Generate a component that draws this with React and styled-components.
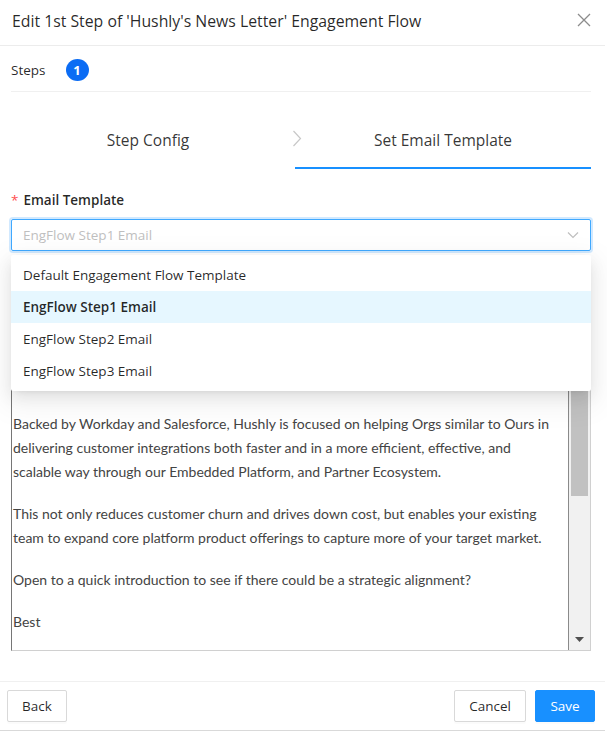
import React from "react";
import styled, { createGlobalStyle } from "styled-components";

const GlobalStyle = createGlobalStyle`
  html, body {
    margin: 0;
    padding: 0;
    background: #ffffff;
  }
  * {
    box-sizing: border-box;
  }
`;

const FONT = `"Open Sans", "Noto Sans", Arial, sans-serif`;

const options = [
  "Default Engagement Flow Template",
  "EngFlow Step1 Email",
  "EngFlow Step2 Email",
  "EngFlow Step3 Email",
];

const paragraphs = [
  "Backed by Workday and Salesforce, Hushly is focused on helping Orgs similar to Ours in delivering customer integrations both faster and in a more efficient, effective, and scalable way through our Embedded Platform, and Partner Ecosystem.",
  "This not only reduces customer churn and drives down cost, but enables your existing team to expand core platform product offerings to capture more of your target market.",
  "Open to a quick introduction to see if there could be a strategic alignment?",
  "Best",
];

const App = () => {
  return (
    <>
      <GlobalStyle />
      <Modal>
        <Header>
          <Title>Edit 1st Step of 'Hushly's News Letter' Engagement Flow</Title>
          <CloseButton aria-label="close">
            <svg width="14" height="14" viewBox="0 0 14 14">
              <path
                d="M1 1 L13 13 M13 1 L1 13"
                stroke="#8c8c8c"
                strokeWidth="1.3"
                fill="none"
              />
            </svg>
          </CloseButton>
        </Header>
        <Body>
          <StepsRow>
            <StepsLabel>Steps</StepsLabel>
            <StepBadge>1</StepBadge>
          </StepsRow>
          <TabsNav>
            <Tab width="274px">Step Config</Tab>
            <Chevron>
              <svg width="10" height="17" viewBox="0 0 10 17">
                <path
                  d="M1.5 1 L8.5 8.5 L1.5 16"
                  stroke="#c8c8c8"
                  strokeWidth="1.2"
                  fill="none"
                />
              </svg>
            </Chevron>
            <Tab active>Set Email Template</Tab>
          </TabsNav>
          <FormItem>
            <Label>
              <Required>*</Required>Email Template
            </Label>
            <SelectWrap>
              <Select>
                <Placeholder>EngFlow Step1 Email</Placeholder>
                <svg width="12" height="12" viewBox="0 0 12 12">
                  <path
                    d="M1 3.5 L6 8.5 L11 3.5"
                    stroke="#bfbfbf"
                    strokeWidth="1.2"
                    fill="none"
                  />
                </svg>
              </Select>
              <Dropdown>
                {options.map((o) => (
                  <Option key={o} selected={o === "EngFlow Step1 Email"}>
                    {o}
                  </Option>
                ))}
              </Dropdown>
            </SelectWrap>
          </FormItem>
          <Editor>
            <EditorContent>
              {paragraphs.map((p) => (
                <Para key={p}>{p}</Para>
              ))}
            </EditorContent>
            <ScrollTrack>
              <ScrollThumb />
              <ScrollArrow>
                <svg width="9" height="5" viewBox="0 0 9 5">
                  <path d="M0 0 L9 0 L4.5 5 Z" fill="#505050" />
                </svg>
              </ScrollArrow>
            </ScrollTrack>
          </Editor>
        </Body>
        <Footer>
          <Button>Back</Button>
          <FooterRight>
            <Button>Cancel</Button>
            <Button primary>Save</Button>
          </FooterRight>
        </Footer>
      </Modal>
    </>
  );
};

export default App;

const Modal = styled.div`
  width: 605px;
  height: 731px;
  background: #ffffff;
  display: flex;
  flex-direction: column;
  font-family: ${FONT};
  color: rgba(0, 0, 0, 0.85);
  border-bottom: 1px solid #d9d9d9;
`;

const Header = styled.div`
  height: 46px;
  display: flex;
  flex-direction: row;
  align-items: center;
  justify-content: space-between;
  padding: 0 14px 3px 12px;
  border-bottom: 1px solid #ececec;
`;

const Title = styled.div`
  font-size: 15.8px;
  color: rgba(0, 0, 0, 0.85);
`;

const CloseButton = styled.div`
  display: flex;
  align-items: center;
  justify-content: center;
  width: 14px;
  height: 14px;
  margin-bottom: 2px;
`;

const Body = styled.div`
  flex: 1;
  padding: 0 14px 0 11px;
  display: flex;
  flex-direction: column;
`;

const StepsRow = styled.div`
  height: 46px;
  display: flex;
  flex-direction: row;
  align-items: center;
  gap: 20px;
  border-bottom: 1px solid #f0f0f0;
  padding-top: 2px;
`;

const StepsLabel = styled.div`
  font-size: 13.5px;
  color: rgba(0, 0, 0, 0.85);
`;

const StepBadge = styled.div`
  width: 23px;
  height: 22px;
  border-radius: 50%;
  background: #0b6cf4;
  color: #ffffff;
  font-size: 13px;
  font-weight: 700;
  display: flex;
  align-items: center;
  justify-content: center;
`;

const TabsNav = styled.div`
  height: 77px;
  display: flex;
  flex-direction: row;
  align-items: stretch;
`;

const Tab = styled.div`
  flex: ${(props) => (props.width ? `0 0 ${props.width}` : "1")};
  display: flex;
  align-items: center;
  justify-content: center;
  padding-top: 20px;
  font-size: 15.5px;
  color: rgba(0, 0, 0, 0.8);
  border-bottom: 2px solid ${(props) => (props.active ? "#1890ff" : "transparent")};
`;

const Chevron = styled.div`
  flex: 0 0 8px;
  display: flex;
  align-items: center;
  justify-content: center;
  padding-top: 15px;
  transform: translateX(7px);
`;

const FormItem = styled.div`
  display: flex;
  flex-direction: column;
  padding-top: 22px;
  gap: 10px;
`;

const Label = styled.div`
  font-size: 13.5px;
  font-weight: 600;
  color: rgba(0, 0, 0, 0.85);
  display: flex;
  align-items: center;
`;

const Required = styled.span`
  color: #ff4d4f;
  margin-right: 5px;
  font-weight: 400;
`;

const SelectWrap = styled.div`
  position: relative;
`;

const Select = styled.div`
  height: 32px;
  border: 1px solid #40a9ff;
  border-radius: 2px;
  box-shadow: 0 0 0 2px rgba(24, 144, 255, 0.2);
  display: flex;
  align-items: center;
  justify-content: space-between;
  padding: 0 11px 0 11px;
`;

const Placeholder = styled.div`
  font-size: 13.5px;
  color: #bfbfbf;
`;

const Dropdown = styled.div`
  position: absolute;
  top: 36px;
  left: 0;
  right: 0;
  z-index: 2;
  background: #ffffff;
  padding: 4px 0;
  border-radius: 2px;
  box-shadow: 0 3px 6px -4px rgba(0, 0, 0, 0.12), 0 6px 16px 0 rgba(0, 0, 0, 0.08),
    0 9px 28px 8px rgba(0, 0, 0, 0.05);
`;

const Option = styled.div`
  height: 32px;
  display: flex;
  align-items: center;
  padding: 0 12px;
  font-size: 13.5px;
  color: rgba(0, 0, 0, 0.85);
  font-weight: ${(props) => (props.selected ? 600 : 400)};
  background: ${(props) => (props.selected ? "#e6f7ff" : "transparent")};
`;

const Editor = styled.div`
  margin-top: 23px;
  height: 377px;
  display: flex;
  flex-direction: row;
  border-left: 1px solid #767676;
  border-top: 1px solid #767676;
  border-bottom: 1px solid #d0d0d0;
  border-right: 1px solid #d0d0d0;
`;

const EditorContent = styled.div`
  flex: 1;
  padding: 137px 6px 0 1px;
  overflow: hidden;
  border-right: 1px solid #8a8a8a;
`;

const Para = styled.p`
  margin: 0 0 18px 0;
  font-family: Lato, "Open Sans", sans-serif;
  font-size: 14px;
  line-height: 24px;
  color: #444444;
`;

const ScrollTrack = styled.div`
  width: 21px;
  background: #f1f1f1;
  display: flex;
  flex-direction: column;
  align-items: center;
  padding: 2px 2px 0 2px;
`;

const ScrollThumb = styled.div`
  width: 17px;
  height: 219px;
  background: #c1c1c1;
`;

const ScrollArrow = styled.div`
  margin-top: auto;
  height: 22px;
  display: flex;
  align-items: center;
  justify-content: center;
`;

const Footer = styled.div`
  height: 49px;
  display: flex;
  flex-direction: row;
  align-items: center;
  justify-content: space-between;
  padding: 0 10px 0 7px;
  border-top: 1px solid #f0f0f0;
`;

const FooterRight = styled.div`
  display: flex;
  flex-direction: row;
  gap: 9px;
`;

const Button = styled.div`
  height: 32px;
  padding: 0 14px;
  display: flex;
  align-items: center;
  justify-content: center;
  border-radius: 2px;
  font-size: 13.5px;
  min-width: 60px;
  border: 1px solid ${(props) => (props.primary ? "#1890ff" : "#d9d9d9")};
  background: ${(props) => (props.primary ? "#1890ff" : "#ffffff")};
  color: ${(props) => (props.primary ? "#ffffff" : "rgba(0, 0, 0, 0.85)")};
  box-shadow: 0 2px 0 rgba(0, 0, 0, 0.015);
`;
